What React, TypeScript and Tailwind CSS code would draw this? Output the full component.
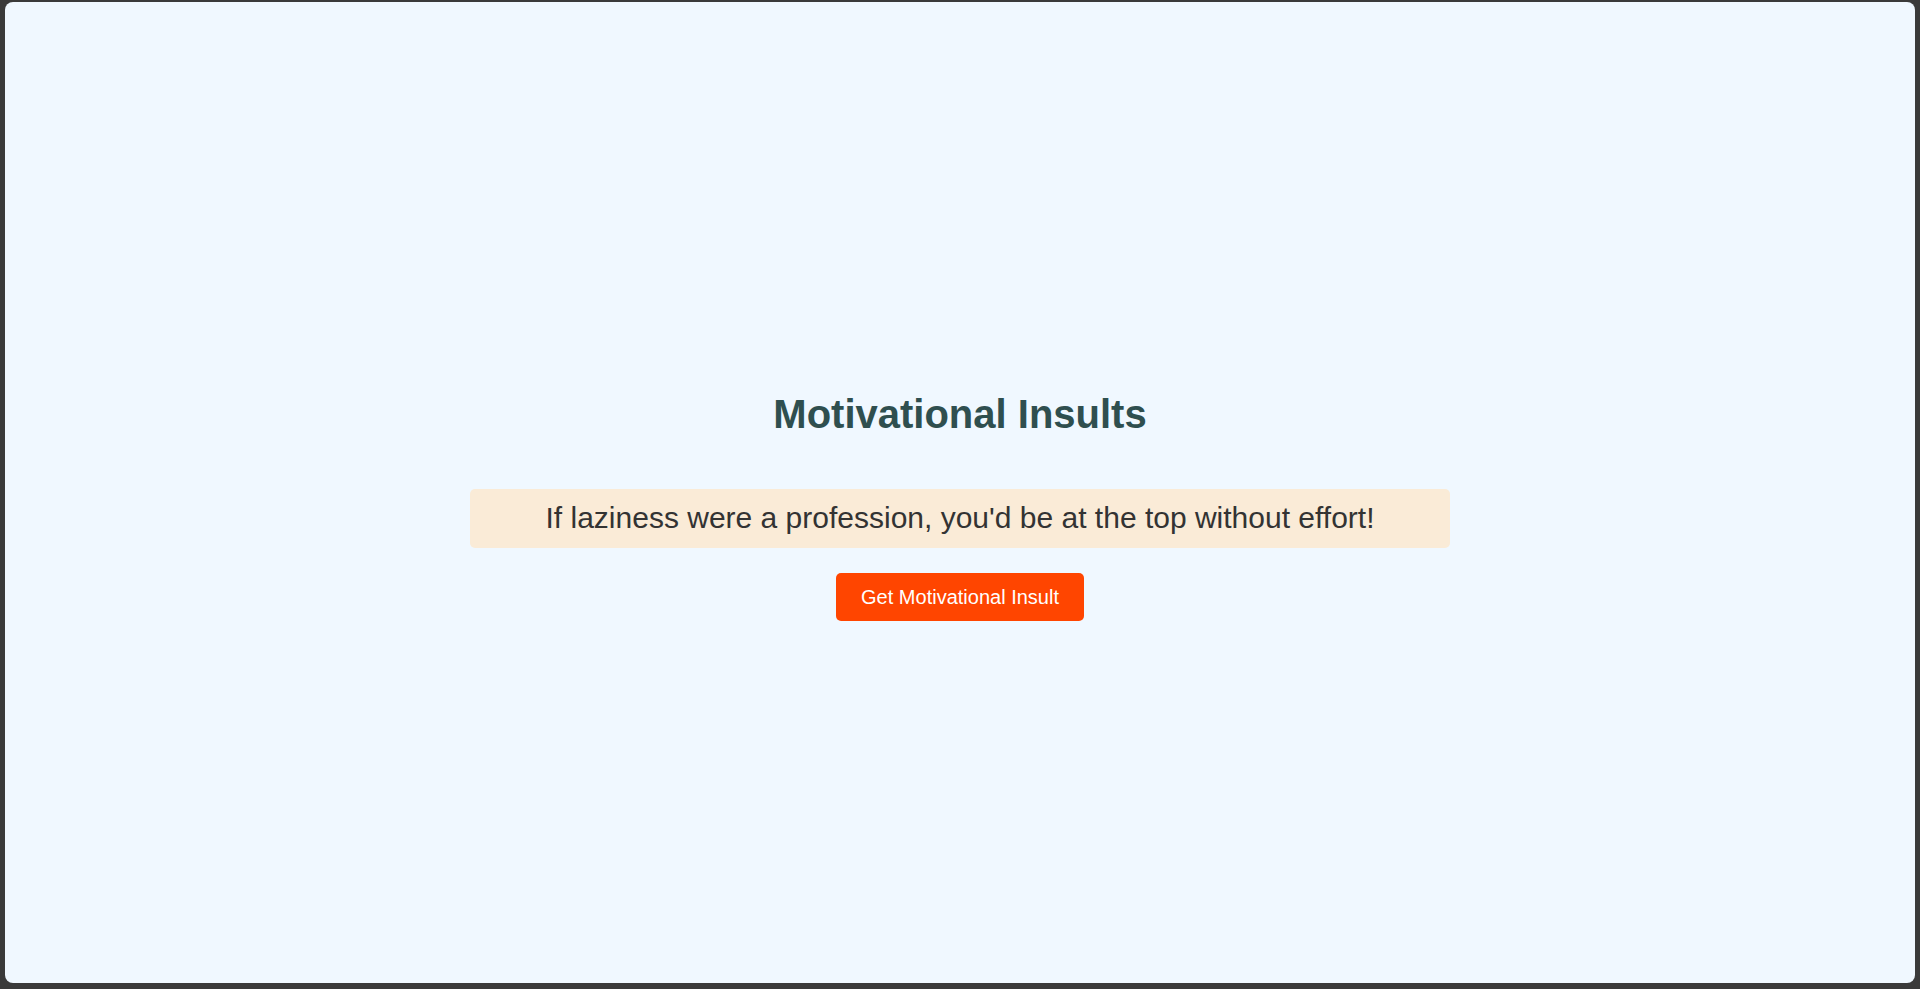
import React from "react";

const App = () => {
  return (
    <div className="h-screen w-full bg-[#3a3a3a] pt-[2px] pl-[5px] pr-[5px] pb-[6px] font-['Liberation_Sans',Arial,sans-serif]">
      <div className="h-full w-full rounded-lg bg-[#f0f8ff] flex flex-col items-center justify-center">
        <h1 className="mt-[27px] mb-[52px] text-[40px] leading-[46px] font-bold text-[#2f4f4f]">
          Motivational Insults
        </h1>
        <div className="w-[980px] rounded-[5px] bg-[#faebd7] pt-[11px] pb-[13px] text-center text-[30px] leading-[35px] text-[#333333]">
          If laziness were a profession, you'd be at the top without effort!
        </div>
        <button className="mt-[25px] h-[48px] rounded-[5px] bg-[#ff4500] px-[25px] pb-[1px] text-[20px] text-white">
          Get Motivational Insult
        </button>
      </div>
    </div>
  );
};

export default App;
